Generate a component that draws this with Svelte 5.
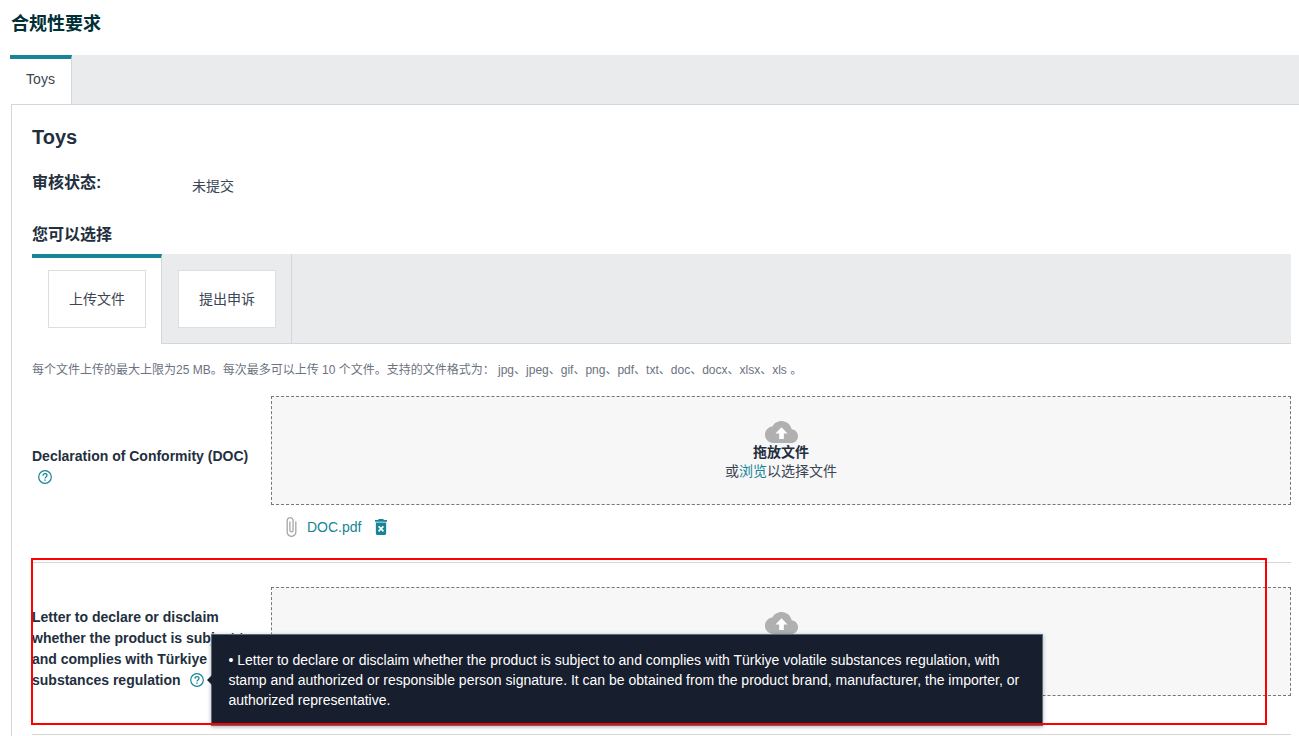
<script lang="ts">
	type Requirement = { label: string; files: string[]; hint?: string };

	const formats = ['jpg', 'jpeg', 'gif', 'png', 'pdf', 'txt', 'doc', 'docx', 'xlsx', 'xls'];
	const actions = ['上传文件', '提出申诉'];

	let activeAction = $state(0);
	let requirements: Requirement[] = $state([
		{ label: 'Declaration of Conformity (DOC)', files: ['DOC.pdf'] },
		{
			label: 'Letter to declare or disclaim whether the product is subject to and complies with Türkiye volatile substances regulation',
			files: [],
			hint: '• Letter to declare or disclaim whether the product is subject to and complies with Türkiye volatile substances regulation, with stamp and authorized or responsible person signature. It can be obtained from the product brand, manufacturer, the importer, or authorized representative.',
		},
	]);

	function removeFile(req: Requirement, index: number) {
		req.files.splice(index, 1);
	}
</script>

<main class="page">
	<h1>合规性要求</h1>

	<div class="tabs" role="tablist">
		<button class="tab" role="tab" aria-selected="true">Toys</button>
	</div>

	<section class="panel">
		<h2>Toys</h2>
		<div class="status">
			<h3>审核状态:</h3>
			<span class="status-value">未提交</span>
		</div>
		<h3>您可以选择</h3>

		<div class="actions">
			{#each actions as action, i}
				<div class="action" class:active={i === activeAction}>
					<button class="action-btn" onclick={() => (activeAction = i)}>{action}</button>
				</div>
			{/each}
		</div>

		<p class="note">
			每个文件上传的最大上限为25 MB。每次最多可以上传 10 个文件。支持的文件格式为： {formats.join('、')} 。
		</p>

		{#each requirements as req}
			<div class="requirement">
				<div class="label">
					{req.label}
					<span class="help">
						<button class="help-btn" aria-label="Help">
							<svg width="14" height="14" viewBox="0 0 14 14" fill="none" stroke="currentColor">
								<circle cx="7" cy="7" r="6.3" stroke-width="1.2" />
								<path d="M5 5.7C5 4.5 5.8 3.7 7 3.7s2 .8 2 1.8c0 1.4-2 1.5-2 3" stroke-width="1.2" />
								<path d="M7 9.5v1.3" stroke-width="1.3" />
							</svg>
						</button>
						{#if req.hint}
							<span class="tooltip" role="tooltip">{req.hint}</span>
						{/if}
					</span>
				</div>
				<div class="upload">
					<div class="dropzone">
						<svg width="33" height="22" viewBox="0 4 24 16" fill="#b0b0b0">
							<path d="M19.35 10.04C18.67 6.59 15.64 4 12 4 9.11 4 6.6 5.64 5.35 8.04 2.34 8.36 0 10.91 0 14c0 3.31 2.69 6 6 6h13c2.76 0 5-2.24 5-5 0-2.64-2.05-4.78-4.65-4.96z" />
							<path d="M13.7 13v4.1h-3.4V13H7.6L12 8.5l4.4 4.5z" fill="#fff" />
						</svg>
						<strong>拖放文件</strong>
						<span>或<a href="#browse">浏览</a>以选择文件</span>
					</div>
					{#each req.files as file, i}
						<div class="file">
							<svg width="11" height="20" viewBox="7 1 11 22" fill="#aaa">
								<path d="M16.5 6v11.5c0 2.21-1.79 4-4 4s-4-1.79-4-4V5c0-1.38 1.12-2.5 2.5-2.5s2.5 1.12 2.5 2.5v10.5c0 .55-.45 1-1 1s-1-.45-1-1V6H10v9.5c0 1.38 1.12 2.5 2.5 2.5s2.5-1.12 2.5-2.5V5c0-2.21-1.79-4-4-4S7 2.79 7 5v12.5c0 3.04 2.46 5.5 5.5 5.5s5.5-2.46 5.5-5.5V6h-1.5z" />
							</svg>
							<a href="#file">{file}</a>
							<button class="remove" aria-label="Delete {file}" onclick={() => removeFile(req, i)}>
								<svg width="12" height="16" viewBox="5 3 14 18" preserveAspectRatio="none" fill="currentColor">
									<path d="M6 19c0 1.1.9 2 2 2h8c1.1 0 2-.9 2-2V7H6v12zm2.46-7.12l1.41-1.41L12 12.59l2.12-2.12 1.41 1.41L13.41 14l2.12 2.12-1.41 1.41L12 15.41l-2.12 2.12-1.41-1.41L10.59 14l-2.13-2.12zM15.5 4l-1-1h-5l-1 1H5v2h14V4z" />
								</svg>
							</button>
						</div>
					{/each}
				</div>
				{#if req.hint}
					<div class="highlight"></div>
				{/if}
			</div>
		{/each}
	</section>
</main>

<style>
	:global(body) {
		background: #fff;
	}

	.page {
		--teal: #158597;
		--line: #d5d6d9;
		--bar: #eaebed;
		--heading: #232f3e;
		--text: #3b4554;
		min-height: 100vh;
		box-sizing: border-box;
		display: flex;
		flex-direction: column;
		padding: 12px 0 0 10px;
		color: var(--text);
		font-family: 'Liberation Sans', 'Noto Sans CJK SC', sans-serif;
		font-size: 14px;
		line-height: 20px;
	}

	h1, h2, h3, p { margin: 0; }

	h2, h3, strong { color: var(--heading); }

	h1 {
		font-size: 18px;
		line-height: 24px;
		color: #002f36;
		padding-left: 1px;
		margin-bottom: 19px;
	}

	h2 {
		font-size: 20px;
		line-height: 24px;
		margin-bottom: 22px;
	}

	h3 {
		font-size: 16px;
		line-height: 24px;
		font-weight: 600;
	}

	a {
		color: var(--teal);
		text-decoration: none;
	}

	button {
		font: inherit;
		color: inherit;
		cursor: pointer;
	}

	svg { display: block; }

	.tabs {
		display: flex;
		background: var(--bar);
	}

	.tab {
		width: 62px;
		height: 49px;
		padding: 0 0 6px;
		border: 0;
		border-top: 4px solid var(--teal);
		border-right: 1px solid var(--line);
		background: #fff;
	}

	.panel {
		flex: 1;
		margin-left: 1px;
		padding: 20px 8px 0 20px;
		border: 1px solid var(--line);
		border-width: 1px 0 0 1px;
	}

	.status {
		display: flex;
		margin-bottom: 27px;
	}

	.status h3 { width: 160px; }

	.status-value { padding-top: 5px; }

	.actions {
		display: flex;
		background: var(--bar);
		margin-top: 7px;
		box-shadow: inset 0 -1px var(--line);
	}

	.action {
		box-sizing: border-box;
		width: 130px;
		height: 90px;
		padding: 16px;
		border-right: 1px solid var(--line);
	}

	.action.active {
		border-top: 4px solid var(--teal);
		padding-top: 12px;
		background: #fff;
	}

	.action-btn {
		width: 98px;
		height: 58px;
		padding: 0;
		background: #fff;
		border: 1px solid #dcdee1;
	}

	.note {
		font-size: 12px;
		color: #6b7280;
		padding: 16px 0;
	}

	.requirement {
		position: relative;
		display: flex;
		align-items: center;
		padding-bottom: 24px;
		margin-bottom: 24px;
		border-bottom: 1px solid var(--line);
	}

	.requirement:last-child { margin-bottom: 0; }

	.label {
		box-sizing: border-box;
		width: 239px;
		flex-shrink: 0;
		padding-right: 3px;
		color: var(--heading);
		font-weight: 700;
		line-height: 21px;
	}

	.help {
		position: relative;
		display: inline-block;
		margin-left: 6px;
		vertical-align: -2px;
	}

	.help-btn {
		display: block;
		padding: 0;
		border: 0;
		background: none;
		color: var(--teal);
	}

	.tooltip {
		position: absolute;
		z-index: 1;
		left: 21px;
		top: 50%;
		transform: translateY(-50%);
		box-sizing: border-box;
		width: 832px;
		padding: 15px 16px;
		border: 1px solid #5a6b7b;
		background: #171e2d;
		box-shadow: 0 1px 4px rgba(0, 0, 0, 0.3);
		color: #fff;
		font-weight: 400;
		line-height: 20px;
	}

	.tooltip::before {
		content: '';
		position: absolute;
		right: 100%;
		top: 50%;
		transform: translateY(-50%);
		border: 5px solid transparent;
		border-left: 0;
		border-right-color: #171e2d;
	}

	.upload {
		flex: 1;
		padding-bottom: 14px;
	}

	.dropzone {
		box-sizing: border-box;
		height: 109px;
		display: flex;
		flex-direction: column;
		align-items: center;
		padding-top: 24px;
		background: #f7f7f7;
		border: 1px dashed #777;
		line-height: 19px;
	}

	.file {
		display: flex;
		align-items: center;
		gap: 10px;
		height: 20px;
		padding: 12px 0 0 15px;
		margin-bottom: -13px;
	}

	.remove {
		margin-left: 4px;
		padding: 0;
		border: 0;
		background: none;
		color: var(--teal);
	}

	/* sits above the tooltip so the frame stays unbroken */
	.highlight {
		position: absolute;
		z-index: 2;
		inset: -29px 24px 9px -1px;
		border: 2px solid #f00;
		pointer-events: none;
	}
</style>
